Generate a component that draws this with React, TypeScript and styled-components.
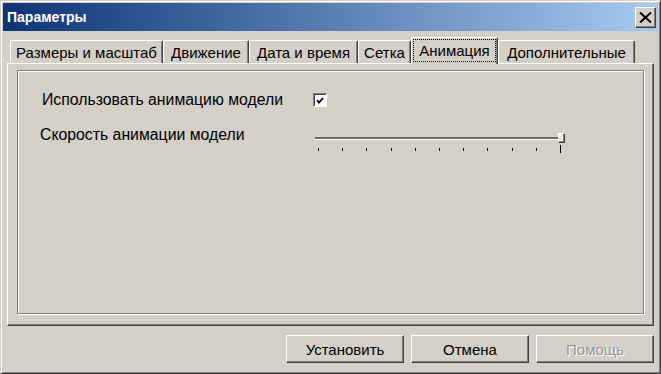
import styled, { createGlobalStyle } from "styled-components";

const GlobalStyle = createGlobalStyle`
  html, body {
    margin: 0;
    padding: 0;
    background: #d4d0c8;
  }
  body {
    font-family: "Liberation Sans", Tahoma, Arial, sans-serif;
  }
`;

const Window = styled.div`
  width: 661px;
  height: 374px;
  box-sizing: border-box;
  background: #d4d0c8;
  border: 1px solid;
  border-color: #d4d0c8 #404040 #404040 #d4d0c8;
  box-shadow: inset 1px 1px 0 #fff, inset -1px -1px 0 #808080;
  padding: 2px;
  display: flex;
  flex-direction: column;
`;

const TitleBar = styled.div`
  height: 28px;
  flex: none;
  display: flex;
  align-items: center;
  justify-content: space-between;
  padding: 0 2px;
  background: linear-gradient(to right, #0f3476, #a6caf0);
`;

const Title = styled.div`
  color: #fff;
  font-weight: bold;
  font-size: 14px;
  padding-left: 2px;
`;

const CloseButton = styled.button`
  width: 21px;
  height: 21px;
  padding: 0;
  display: flex;
  align-items: center;
  justify-content: center;
  background: #d4d0c8;
  border: 1px solid;
  border-color: #fff #404040 #404040 #fff;
  box-shadow: inset -1px -1px 0 #808080;
`;

const Body = styled.div`
  flex: 1;
  display: flex;
  flex-direction: column;
  padding: 6px 4px 8px 4px;
`;

const TabStrip = styled.div`
  height: 26px;
  flex: none;
  display: flex;
  align-items: flex-end;
  padding-left: 3px;
  position: relative;
  z-index: 1;
`;

const Tab = styled.div<{ $w: number; $active?: boolean }>`
  width: ${(p) => p.$w}px;
  height: ${(p) => (p.$active ? 27 : 23)}px;
  margin-bottom: ${(p) => (p.$active ? -1 : 0)}px;
  box-sizing: border-box;
  display: flex;
  align-items: center;
  justify-content: center;
  padding: ${(p) => (p.$active ? "2px 2px 3px" : "1px 0 0")};
  background: #d4d0c8;
  border-top: 1px solid #fff;
  border-left: 1px solid #fff;
  border-right: 1px solid #404040;
  border-radius: 2px 2px 0 0;
  box-shadow: inset -1px 0 0 #808080;
  font-size: 15px;
  color: #000;
  white-space: nowrap;
`;

const FocusLabel = styled.span`
  flex: 1;
  align-self: stretch;
  display: flex;
  align-items: center;
  justify-content: center;
  outline: 1px dotted #000;
`;

const Panel = styled.div`
  flex: 1;
  display: flex;
  padding: 6px 9px 11px 9px;
  border-top: 1px solid #fff;
  border-left: 1px solid #fff;
  border-right: 1px solid #404040;
  border-bottom: 1px solid #404040;
  box-shadow: inset -1px -1px 0 #808080;
`;

const GroupBox = styled.div`
  flex: 1;
  border: 1px solid #808080;
  box-shadow: 1px 1px 0 #fff, inset 1px 1px 0 #fff;
  padding-top: 17px;
  padding-left: 22px;
`;

const Row = styled.div<{ $h: number; $top?: boolean }>`
  height: ${(p) => p.$h}px;
  display: flex;
  align-items: ${(p) => (p.$top ? "flex-start" : "center")};
  margin-bottom: 10px;
`;

const Label = styled.div<{ $indent?: number }>`
  width: 273px;
  box-sizing: border-box;
  padding-left: ${(p) => p.$indent ?? 0}px;
  font-size: 15.8px;
  line-height: 26px;
  color: #000;
`;

const CheckBox = styled.div`
  width: 14px;
  height: 14px;
  box-sizing: border-box;
  background: #fff;
  border: 1px solid;
  border-color: #808080 #fff #fff #808080;
  box-shadow: inset 1px 1px 0 #404040;
  display: flex;
  align-items: center;
  justify-content: center;
`;

const Slider = styled.div`
  width: 249px;
  margin-left: 2px;
  padding-top: 15px;
`;

const Track = styled.div`
  position: relative;
  height: 2px;
  background: #6a6a6a;
  border-bottom: 1px solid #fff;
`;

const Thumb = styled.div`
  position: absolute;
  left: 243px;
  top: -4px;
  width: 7px;
  height: 10px;
  box-sizing: border-box;
  background: #ece9e2;
  border: 1px solid;
  border-color: #fff #404040 #404040 #fff;
  box-shadow: inset -1px -1px 0 #808080;
`;

const Ticks = styled.div`
  height: 8px;
  margin: 5px 0 0 3px;
  width: 243px;
  display: flex;
  justify-content: space-between;
  align-items: center;
`;

const Tick = styled.div<{ $long?: boolean }>`
  width: 1px;
  height: ${(p) => (p.$long ? 8 : 3)}px;
  background: #000;
`;

const ButtonRow = styled.div`
  flex: none;
  display: flex;
  justify-content: flex-end;
  gap: 7px;
  margin-top: 9px;
`;

const Button = styled.button`
  width: 118px;
  height: 28px;
  padding: 0;
  background: #d4d0c8;
  border: 1px solid;
  border-color: #fff #404040 #404040 #fff;
  box-shadow: inset -1px -1px 0 #808080;
  font-family: "Liberation Sans", Tahoma, Arial, sans-serif;
  font-size: 15px;
  color: #000;

  &:disabled {
    color: #9a9892;
    text-shadow: 1px 1px 0 #fff;
  }
`;

const tabs = [
  { label: "Размеры и масштаб", w: 153 },
  { label: "Движение", w: 86 },
  { label: "Дата и время", w: 109 },
  { label: "Сетка", w: 53 },
  { label: "Анимация", w: 87, active: true },
  { label: "Дополнительные", w: 137 },
];

export default function App() {
  return (
    <>
      <GlobalStyle />
      <Window>
        <TitleBar>
          <Title>Параметры</Title>
          <CloseButton aria-label="Закрыть">
            <svg width="13" height="11" viewBox="0 0 13 11">
              <path d="M1 0.5 L12 10.5 M12 0.5 L1 10.5" stroke="#000" strokeWidth="2" />
            </svg>
          </CloseButton>
        </TitleBar>
        <Body>
          <TabStrip>
            {tabs.map((t) => (
              <Tab key={t.label} $w={t.w} $active={t.active}>
                {t.active ? <FocusLabel>{t.label}</FocusLabel> : t.label}
              </Tab>
            ))}
          </TabStrip>
          <Panel>
            <GroupBox>
              <Row $h={24}>
                <Label $indent={2}>Использовать анимацию модели</Label>
                <CheckBox>
                  <svg width="8" height="7" viewBox="0 0 8 7">
                    <path d="M1 3 L3 5.5 L7 1" stroke="#000" strokeWidth="1.8" fill="none" />
                  </svg>
                </CheckBox>
              </Row>
              <Row $h={30} $top>
                <Label>Скорость анимации модели</Label>
                <Slider>
                  <Track>
                    <Thumb />
                  </Track>
                  <Ticks>
                    {Array.from({ length: 11 }).map((_, i) => (
                      <Tick key={i} $long={i === 10} />
                    ))}
                  </Ticks>
                </Slider>
              </Row>
            </GroupBox>
          </Panel>
          <ButtonRow>
            <Button>Установить</Button>
            <Button>Отмена</Button>
            <Button disabled>Помощь</Button>
          </ButtonRow>
        </Body>
      </Window>
    </>
  );
}
